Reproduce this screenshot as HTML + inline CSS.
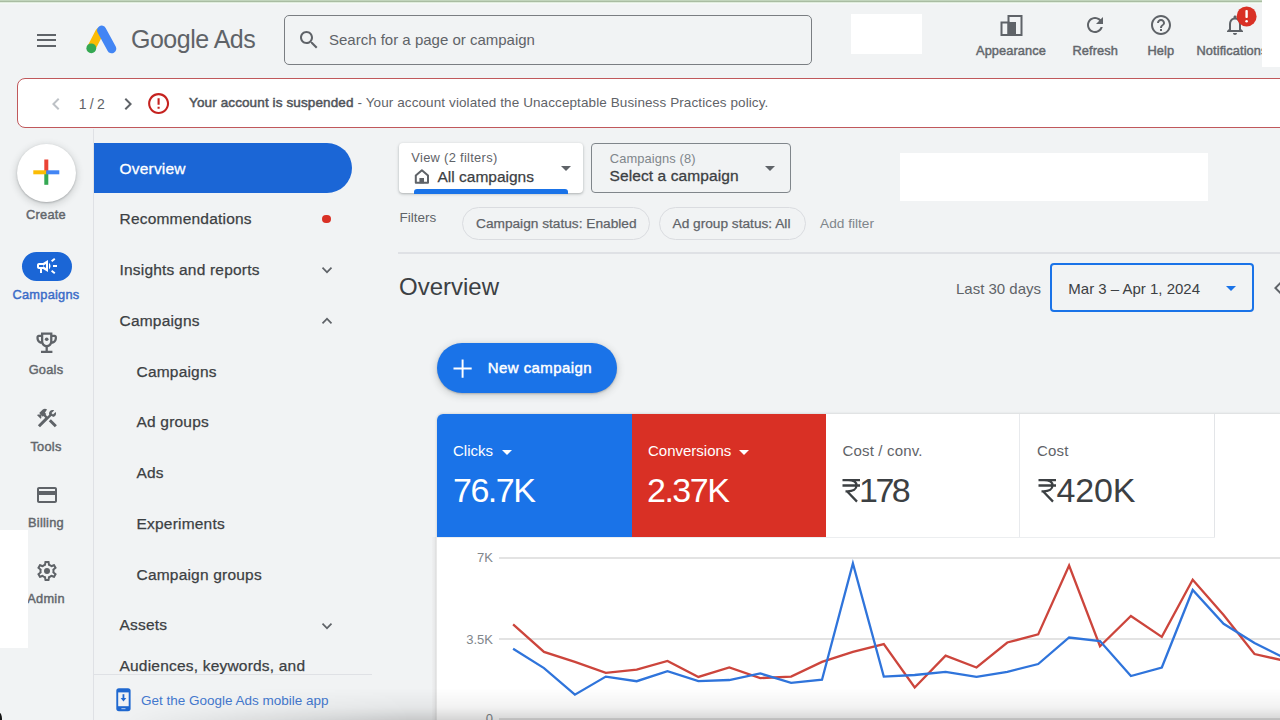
<!DOCTYPE html>
<html><head><meta charset="utf-8">
<style>
*{box-sizing:border-box;margin:0;padding:0}
html,body{width:1280px;height:720px;overflow:hidden;background:#f1f3f4;font-family:"Liberation Sans",sans-serif;color:#202124;position:relative}
.a{position:absolute;white-space:nowrap;line-height:normal}
svg.a{overflow:visible}
.lbl{font-size:12.8px;color:#63676c;font-weight:normal;-webkit-text-stroke:0.45px currentColor;letter-spacing:0.1px}
.rl{font-size:12.8px;color:#63676c;font-weight:normal;-webkit-text-stroke:0.45px currentColor;letter-spacing:0.25px;width:92px;left:0;text-align:center}
.nav{font-size:15.5px;color:#3c4043;letter-spacing:0.2px;-webkit-text-stroke:0.25px #3c4043}
.chip{border:1px solid #dadce0;border-radius:17px}
.ct{font-size:13.7px;color:#5f6368;font-weight:normal;-webkit-text-stroke:0.25px #5f6368}
</style></head><body>
<div class="a" style="left:0;top:0;width:1262px;height:4px;background:linear-gradient(to bottom,#cde0c8 0,#a9bca2 1.5px,#e6f1e4 2.6px,#f5fbf6 3.3px,rgba(245,251,246,0) 4px)"></div>

<!-- ===== header ===== -->
<div class="a" style="left:37px;top:34px;width:19px;height:2px;background:#5f6368"></div>
<div class="a" style="left:37px;top:39px;width:19px;height:2px;background:#5f6368"></div>
<div class="a" style="left:37px;top:44.5px;width:19px;height:2px;background:#5f6368"></div>

<svg class="a" style="left:0;top:0" width="130" height="60">
  <path d="M99.6 32 L91.2 48.2" stroke="#fbbc04" stroke-width="8.6" stroke-linecap="round"/>
  <path d="M101.6 30.2 L111.7 48.7" stroke="#4285f4" stroke-width="9.2" stroke-linecap="round"/>
  <circle cx="91.3" cy="48.3" r="4.9" fill="#34a853"/>
</svg>
<div class="a" style="left:131px;top:25.4px;font-size:25px;color:#5f6368;letter-spacing:-0.5px">Google Ads</div>

<div class="a" style="left:283.5px;top:15px;width:528px;height:50px;border:1.8px solid #7a7e82;border-radius:5px"></div>
<svg class="a" style="left:297px;top:28px" width="24" height="24" viewBox="0 0 24 24"><path fill="#5f6368" d="M15.5 14h-.79l-.28-.27C15.41 12.590 16 11.11 16 9.5 16 5.91 13.09 3 9.5 3S3 5.91 3 9.5 5.91 16 9.5 16c1.61 0 3.090-.59 4.23-1.57l.27.28v.79l5 4.99L20.49 19l-4.99-5zm-6 0C7.01 14 5 11.99 5 9.5S7.01 5 9.5 5 14 7.01 14 9.5 11.99 14 9.5 14z"/></svg>
<div class="a" style="left:329px;top:31px;font-size:15px;color:#5f6368">Search for a page or campaign</div>

<div class="a" style="left:851px;top:14px;width:71px;height:40px;background:#fff"></div>

<!-- appearance icon -->
<svg class="a" style="left:0;top:0" width="1280" height="70">
  <rect x="1008.5" y="16" width="13" height="19" fill="none" stroke="#5f6368" stroke-width="2"/>
  <rect x="1001.5" y="22.5" width="7" height="12.5" fill="none" stroke="#5f6368" stroke-width="2"/>
  <rect x="1008" y="22" width="8" height="13.5" fill="#5f6368"/>
</svg>
<svg class="a" style="left:1083px;top:13px" width="24" height="24" viewBox="0 0 24 24"><path fill="#5f6368" d="M17.65 6.35C16.2 4.9 14.21 4 12 4c-4.42 0-7.99 3.58-7.99 8s3.57 8 7.99 8c3.73 0 6.84-2.55 7.730-6h-2.08c-.82 2.33-3.04 4-5.65 4-3.31 0-6-2.69-6-6s2.69-6 6-6c1.66 0 3.14.69 4.22 1.78L13 11h7V4l-2.35 2.35z"/></svg>
<svg class="a" style="left:1149px;top:13px" width="24" height="24" viewBox="0 0 24 24"><path fill="#5f6368" d="M11 18h2v-2h-2v2zm1-16C6.48 2 2 6.48 2 12s4.48 10 10 10 10-4.48 10-10S17.52 2 12 2zm0 18c-4.41 0-8-3.59-8-8s3.59-8 8-8 8 3.59 8 8-3.590 8-8 8zm0-14c-2.21 0-4 1.79-4 4h2c0-1.1.9-2 2-2s2 .9 2 2c0 2-3 1.75-3 5h2c0-2.25 3-2.5 3-5 0-2.21-1.79-4-4-4z"/></svg>
<svg class="a" style="left:1223px;top:13px" width="24" height="24" viewBox="0 0 24 24"><path fill="#5f6368" d="M12 22c1.1 0 2-.9 2-2h-4c0 1.1.89 2 2 2zm6-6v-5c0-3.07-1.64-5.64-4.5-6.32V4c0-.83-.67-1.5-1.5-1.5s-1.5.67-1.5 1.5v.68C7.63 5.36 6 7.920 6 11v5l-2 2v1h16v-1l-2-2zm-2 1H8v-6c0-2.48 1.51-4.5 4-4.5s4 2.02 4 4.5v6z"/></svg>
<svg class="a" style="left:1236px;top:6px" width="22" height="22"><circle cx="10.6" cy="10.4" r="10" fill="#d93025"/><rect x="9.4" y="4" width="2.4" height="8" rx="1" fill="#fff"/><circle cx="10.6" cy="15.2" r="1.3" fill="#fff"/></svg>

<div class="a lbl" style="left:976px;top:42.7px">Appearance</div>
<div class="a lbl" style="left:1072.5px;top:42.7px">Refresh</div>
<div class="a lbl" style="left:1147.5px;top:42.7px">Help</div>
<div class="a lbl" style="left:1196.5px;top:42.7px">Notifications</div>
<div class="a" style="left:1262px;top:0;width:18px;height:67px;background:#fff"></div>

<!-- ===== banner ===== -->
<div class="a" style="left:17px;top:77.9px;width:1300px;height:50.6px;border:1.5px solid #c0585b;border-radius:8px;background:#fff"></div>
<svg class="a" style="left:44px;top:92px" width="24" height="24" viewBox="0 0 24 24"><path fill="#bdc1c6" d="M15.41 7.41L14 6l-6 6 6 6 1.41-1.41L10.83 12z"/></svg>
<div class="a" style="left:78.8px;top:95.9px;font-size:14px;color:#5f6368;letter-spacing:-0.3px">1 / 2</div>
<svg class="a" style="left:116.1px;top:91.6px" width="24" height="24" viewBox="0 0 24 24"><path fill="#5f6368" d="M10 6L8.59 7.41 13.170 12l-4.58 4.59L10 18l6-6z"/></svg>
<svg class="a" style="left:146.4px;top:90.9px" width="25.2" height="25.2" viewBox="0 0 24 24"><path fill="#c5221f" d="M11 15h2v2h-2zm0-8h2v6h-2zm.99-5C6.47 2 2 6.48 2 12s4.47 10 9.99 10C17.52 22 22 17.52 22 12S17.52 2 11.99 2zM12 20c-4.42 0-8-3.58-8-8s3.58-8 8-8 8 3.58 8 8-3.58 8-8 8z"/></svg>
<div class="a" style="left:189px;top:95.1px;font-size:13.5px;color:#5f6368"><span style="color:#50545a;font-size:13.5px;letter-spacing:0.12px;-webkit-text-stroke:0.5px #50545a">Your account is suspended</span><span style="letter-spacing:0.1px"> - Your account violated the Unacceptable Business Practices policy.</span></div>

<!-- ===== left rail ===== -->
<div class="a" style="left:92.5px;top:129px;width:1.5px;height:591px;background:#dfe1e5"></div>
<div class="a" style="left:17px;top:143.5px;width:58.5px;height:58px;border-radius:50%;background:#fff;box-shadow:0 1px 2px rgba(60,64,67,.3),0 2px 6px 2px rgba(60,64,67,.15)"></div>
<svg class="a" style="left:0;top:0" width="93" height="720">
  <rect x="44.3" y="159.5" width="4" height="13" fill="#ea4335"/>
  <rect x="44.3" y="172" width="4" height="12.8" fill="#34a853"/>
  <rect x="33.3" y="170.3" width="13" height="4" fill="#fbbc04"/>
  <rect x="46.3" y="170.3" width="13" height="4" fill="#4285f4"/>
</svg>
<div class="a rl" style="top:207.2px">Create</div>
<div class="a" style="left:21.5px;top:252px;width:50.5px;height:29px;border-radius:15px;background:#1b66d6"></div>
<svg class="a" style="left:34.5px;top:254px" width="24" height="24" viewBox="0 0 24 24"><path fill="#fff" d="M18 11v2h4v-2h-4zm-2 6.61c.96.71 2.21 1.65 3.2 2.39.4-.53.8-1.07 1.2-1.6-.99-.74-2.24-1.68-3.2-2.4-.4.54-.8 1.08-1.2 1.61zM20.4 5.6c-.4-.53-.8-1.070-1.2-1.6-.99.74-2.24 1.68-3.2 2.4.4.53.8 1.07 1.2 1.6.96-.72 2.21-1.65 3.2-2.4zM4 9c-1.1 0-2 .9-2 2v2c0 1.1.9 2 2 2h1v4h2v-4h1l5 3V6L8 9H4zm11.5 3c0-1.33-.58-2.53-1.5-3.35v6.69c.92-.81 1.5-2.01 1.5-3.34z"/><rect x="4" y="11" width="4.5" height="2" fill="#1b66d6"/><path d="M9 11.2L11 10v4l-2-1.2z" fill="#1b66d6"/></svg>
<div class="a rl" style="top:287.2px;color:#3b6cc8">Campaigns</div>
<svg class="a" style="left:32.8px;top:328.8px" width="27.4" height="27.4" viewBox="0 0 24 24"><path fill="#5f6368" d="M19 5h-2V3H7v2H5c-1.1 0-2 .9-2 2v1c0 2.55 1.92 4.63 4.39 4.94.63 1.5 1.98 2.63 3.61 2.96V19H7v2h10v-2h-4v-3.1c1.63-.33 2.98-1.46 3.61-2.96C19.08 12.63 21 10.55 21 8V7c0-1.1-.9-2-2-2zM5 8V7h2v3.82C5.84 10.4 5 9.3 5 8zm7 6c-1.65 0-3-1.35-3-3V5h6v6c0 1.65-1.35 3-3 3zm7-6c0 1.3-.84 2.4-2 2.82V7h2v1z"/><circle cx="12" cy="9" r="1.6" fill="#5f6368"/></svg>
<div class="a rl" style="top:362.1px">Goals</div>
<svg class="a" style="left:34.5px;top:406px" width="24" height="24" viewBox="0 0 24 24"><path fill="#5f6368" d="M13.78 15.3l6 6 2.11-2.16-6-6-2.11 2.16zm3.72-5.2c-.39 0-.81-.05-1.14-.19L4.97 21.25l-2.11-2.11 7.41-7.4L8.5 9.96l-.72.71-1.45-1.44v2.86l-.7.7-3.52-3.56.7-.7h2.81l-1.4-1.44 3.56-3.560c1.17-1.17 3.07-1.17 4.24 0L9.9 6.65l1.41 1.41-.71.71 1.79 1.79 1.82-1.88c-.14-.33-.19-.75-.19-1.12 0-1.99 1.57-3.56 3.56-3.56.59 0 1.11.14 1.58.42L16.46 7.1l1.5 1.5 2.68-2.68c.28.47.42.97.42 1.58 0 1.99-1.57 3.6-3.56 3.6z"/></svg>
<div class="a rl" style="top:438.5px">Tools</div>
<svg class="a" style="left:34.5px;top:482.5px" width="24" height="24" viewBox="0 0 24 24"><path fill="#5f6368" d="M20 4H4c-1.11 0-1.99.89-1.99 2L2 18c0 1.11.89 2 2 2h16c1.11 0 2-.89 2-2V6c0-1.11-.89-2-2-2zm0 14H4v-6h16v6zm0-10H4V6h16v2z"/></svg>
<div class="a rl" style="top:514.5px">Billing</div>
<svg class="a" style="left:34.5px;top:558.5px" width="24" height="24" viewBox="0 0 24 24"><path fill="#5f6368" d="M19.43 12.98c.04-.32.07-.64.07-.98 0-.34-.03-.66-.07-.98l2.11-1.65c.19-.15.24-.42.12-.64l-2-3.46c-.09-.16-.26-.25-.44-.25-.06 0-.12.01-.17.03l-2.49 1c-.52-.4-1.08-.73-1.69-.98l-.38-2.65C14.46 2.18 14.25 2 14 2h-4c-.25 0-.46.18-.49.42l-.38 2.65c-.61.25-1.17.59-1.690.98l-2.49-1c-.06-.02-.12-.03-.18-.03-.17 0-.34.09-.43.25l-2 3.46c-.13.22-.07.49.12.64l2.11 1.65c-.04.32-.07.65-.07.98 0 .33.03.66.07.98l-2.11 1.65c-.19.15-.24.42-.12.64l2 3.46c.09.16.26.25.44.25.06 0 .12-.01.17-.03l2.49-1c.52.4 1.08.73 1.69.98l.38 2.65c.03.24.24.42.49.42h4c.25 0 .46-.18.49-.42l.38-2.65c.61-.25 1.17-.59 1.69-.98l2.49 1c.06.02.12.03.18.03.17 0 .34-.09.43-.25l2-3.46c.12-.22.07-.49-.12-.64l-2.11-1.65zm-1.98-1.71c.04.31.05.52.05.73 0 .21-.02.43-.05.73l-.14 1.13.89.7 1.08.84-.7 1.21-1.27-.51-1.04-.42-.9.68c-.43.32-.84.56-1.25.73l-1.06.43-.16 1.13-.2 1.35h-1.4l-.19-1.35-.16-1.13-1.06-.43c-.43-.18-.83-.41-1.23-.71l-.91-.7-1.06.43-1.27.51-.7-1.21 1.08-.84.89-.7-.14-1.13c-.03-.31-.05-.54-.05-.74s.02-.43.05-.73l.14-1.13-.89-.7-1.08-.84.7-1.21 1.27.51 1.04.42.9-.68c.43-.32.84-.56 1.25-.73l1.06-.43.16-1.13.2-1.35h1.39l.19 1.35.16 1.13 1.06.43c.43.18.83.41 1.23.71l.91.7 1.06-.43 1.27-.51.7 1.21-1.07.85-.89.7.14 1.13z"/><circle cx="12" cy="12" r="3" fill="#5f6368"/></svg>
<div class="a rl" style="top:591px">Admin</div>
<div class="a" style="left:0;top:529.5px;width:28.3px;height:118.5px;background:#fff"></div>

<!-- ===== nav ===== -->
<div class="a" style="left:94px;top:143px;width:258px;height:50px;border-radius:0 25px 25px 0;background:#1b66d6"></div>
<div class="a nav" style="left:119.5px;top:159.7px;color:#fff;-webkit-text-stroke:0.3px #fff">Overview</div>
<div class="a nav" style="left:119.5px;top:210px">Recommendations</div>
<div class="a" style="left:322.3px;top:214.5px;width:8.6px;height:8.6px;border-radius:50%;background:#d93025"></div>
<div class="a nav" style="left:119.5px;top:260.8px">Insights and reports</div>
<svg class="a" style="left:314.5px;top:258px" width="24" height="24" viewBox="0 0 24 24"><path fill="#5f6368" d="M16.59 8.590L12 13.17 7.41 8.59 6 10l6 6 6-6z" transform="translate(12 12) scale(.85) translate(-12 -12)"/></svg>
<div class="a nav" style="left:119.5px;top:311.5px">Campaigns</div>
<svg class="a" style="left:314.5px;top:308.5px" width="24" height="24" viewBox="0 0 24 24"><path fill="#5f6368" d="M12 8l-6 6 1.41 1.41L12 10.83l4.59 4.58L18 14z" transform="translate(12 12) scale(.85) translate(-12 -12)"/></svg>
<div class="a nav" style="left:136.5px;top:362.5px">Campaigns</div>
<div class="a nav" style="left:136.5px;top:413.2px">Ad groups</div>
<div class="a nav" style="left:136.5px;top:464px">Ads</div>
<div class="a nav" style="left:136.5px;top:514.8px">Experiments</div>
<div class="a nav" style="left:136.5px;top:565.6px">Campaign groups</div>
<div class="a nav" style="left:119.5px;top:616.2px">Assets</div>
<svg class="a" style="left:314.5px;top:613.5px" width="24" height="24" viewBox="0 0 24 24"><path fill="#5f6368" d="M16.59 8.59L12 13.17 7.41 8.59 6 10l6 6 6-6z" transform="translate(12 12) scale(.85) translate(-12 -12)"/></svg>
<div class="a" style="left:94px;top:640px;width:278px;height:33.5px;overflow:hidden">
  <div class="a nav" style="left:25.5px;top:16.6px">Audiences, keywords, and</div>
</div>
<div class="a" style="left:94px;top:673.5px;width:278px;height:1.5px;background:#dfe1e5"></div>
<svg class="a" style="left:0;top:0" width="140" height="720"><rect x="116.3" y="688.2" width="14.3" height="23" rx="2.6" fill="#1f68d0"/><rect x="118.2" y="692.4" width="10.5" height="13.8" fill="#f1f3f4"/><path d="M123.45 694.2V698.8" stroke="#1f68d0" stroke-width="1.8"/><path d="M120.6 698H126.3L123.45 701.6Z" fill="#1f68d0"/><path d="M121.4 708.6H125.5" stroke="#9cbbe8" stroke-width="1.2"/></svg><div class="a" style="left:-3.5px;top:712.5px;width:5px;height:12px;border-radius:50%;background:#151515"></div>
<div class="a" style="left:141px;top:692.6px;font-size:13.5px;color:#4479cf">Get the Google Ads mobile app</div>

<!-- ===== main top ===== -->
<div class="a" style="left:399px;top:143px;width:183.5px;height:50px;background:#fff;border-radius:4px;box-shadow:0 1px 2px rgba(60,64,67,.25),0 1px 3px 1px rgba(60,64,67,.1)"></div>
<div class="a" style="left:411.3px;top:149.8px;font-size:12.9px;color:#5f6368;letter-spacing:0.3px">View (2 filters)</div>
<svg class="a" style="left:410px;top:165px" width="24" height="24" viewBox="0 0 24 24"><path d="M5.8 17.75V10.4L11.9 5.2L18 10.4V17.75Z" fill="none" stroke="#5f6368" stroke-width="2" stroke-linejoin="round"/><rect x="9.4" y="13" width="4.6" height="5.3" fill="#5f6368"/></svg>
<div class="a" style="left:437.5px;top:167.5px;font-size:15.5px;color:#3c4043;-webkit-text-stroke:0.25px #3c4043">All campaigns</div>
<svg class="a" style="left:554px;top:156px" width="24" height="24" viewBox="0 0 24 24"><path fill="#5f6368" d="M7 10l5 5 5-5z"/></svg>
<div class="a" style="left:413.5px;top:189px;width:154.5px;height:4.5px;background:#1a73e8;border-radius:3px 3px 0 0"></div>

<div class="a" style="left:591px;top:143px;width:199.5px;height:50px;border:1.2px solid #80868b;border-radius:4px"></div>
<div class="a" style="left:609.8px;top:150.8px;font-size:12.9px;color:#80868b;letter-spacing:0.1px">Campaigns (8)</div>
<div class="a" style="left:609.5px;top:167px;font-size:15.5px;color:#3c4043;letter-spacing:0.1px;-webkit-text-stroke:0.3px #3c4043">Select a campaign</div>
<svg class="a" style="left:758px;top:156px" width="24" height="24" viewBox="0 0 24 24"><path fill="#5f6368" d="M7 10l5 5 5-5z"/></svg>

<div class="a" style="left:900px;top:153px;width:308px;height:48px;background:#fff"></div>

<div class="a" style="left:399.5px;top:210.4px;font-size:13.5px;color:#5f6368">Filters</div>
<div class="a chip" style="left:462px;top:207px;width:188px;height:32.5px"></div>
<div class="a ct" style="left:476px;top:216.1px">Campaign status: Enabled</div>
<div class="a chip" style="left:659px;top:207px;width:147px;height:32.5px"></div>
<div class="a ct" style="left:672.5px;top:216.1px">Ad group status: All</div>
<div class="a" style="left:820px;top:216.1px;font-size:13.7px;color:#80868b">Add filter</div>
<div class="a" style="left:398px;top:252px;width:882px;height:1.5px;background:#dfe1e5"></div>

<div class="a" style="left:399px;top:273.1px;font-size:24px;color:#3c4043">Overview</div>
<div class="a" style="left:956px;top:279.7px;font-size:15px;color:#5f6368">Last 30 days</div>
<div class="a" style="left:1050px;top:263px;width:203.5px;height:49px;border:2px solid #1a73e8;border-radius:4px"></div>
<div class="a" style="left:1068.3px;top:279.7px;font-size:15px;color:#3c4043">Mar 3 – Apr 1, 2024</div>
<svg class="a" style="left:1219px;top:276px" width="24" height="24" viewBox="0 0 24 24"><path fill="#1a73e8" d="M7 10l5 5 5-5z"/></svg>
<svg class="a" style="left:1266px;top:276px" width="24" height="24" viewBox="0 0 24 24"><path fill="#5f6368" d="M15.41 7.41L14 6l-6 6 6 6 1.41-1.41L10.83 12z"/></svg>

<div class="a" style="left:437px;top:342.5px;width:179.5px;height:50px;border-radius:25px;background:#1a73e8;box-shadow:0 1px 2px rgba(60,64,67,.3),0 2px 6px 2px rgba(60,64,67,.15)"></div>
<svg class="a" style="left:446.5px;top:352.5px" width="31.2" height="31.2" viewBox="0 0 24 24"><path fill="#fff" d="M19 12.75h-6.25V19h-1.5v-6.25H5v-1.5h6.25V5h1.5v6.25H19z"/></svg>
<div class="a" style="left:487.8px;top:359px;font-size:15px;color:#fff;letter-spacing:0.42px;-webkit-text-stroke:0.45px #fff">New campaign</div>

<!-- ===== scorecards ===== -->
<div class="a" style="left:437px;top:414px;width:843px;height:306px;background:#fff;border-radius:6px 0 0 0;box-shadow:0 0 2px 1px rgba(60,64,67,.12)"></div>
<div class="a" style="left:437px;top:414px;width:194.5px;height:122.5px;background:#1a73e8;border-radius:6px 0 0 0"></div>
<div class="a" style="left:631.5px;top:414px;width:194px;height:122.5px;background:#d93025"></div>
<div class="a" style="left:1019px;top:414px;width:1px;height:122.5px;background:#e8eaed"></div>
<div class="a" style="left:1214px;top:414px;width:1.2px;height:122.5px;background:#e3e5e8"></div>
<div class="a" style="left:437px;top:536.5px;width:778px;height:1px;background:#eceef0"></div>

<div class="a" style="left:453px;top:442.2px;font-size:15px;color:#fff">Clicks</div>
<svg class="a" style="left:495px;top:440px" width="24" height="24" viewBox="0 0 24 24"><path fill="#fff" d="M7 10l5 5 5-5z"/></svg>
<div class="a" style="left:453px;top:470.7px;font-size:34px;color:#fff;letter-spacing:-1.5px">76.7K</div>
<div class="a" style="left:648px;top:442.2px;font-size:15px;color:#fff">Conversions</div>
<svg class="a" style="left:732px;top:440px" width="24" height="24" viewBox="0 0 24 24"><path fill="#fff" d="M7 10l5 5 5-5z"/></svg>
<div class="a" style="left:647px;top:470.7px;font-size:34px;color:#fff;letter-spacing:-1.5px">2.37K</div>
<div class="a" style="left:842.5px;top:442px;font-size:15px;color:#5f6368;letter-spacing:0.17px">Cost / conv.</div>
<div class="a" style="left:1037px;top:442px;font-size:15px;color:#5f6368;letter-spacing:0.17px">Cost</div>

<svg class="a" style="left:842px;top:479px" width="20" height="24" viewBox="0 0 20 24"><path fill="none" stroke="#3c4043" stroke-width="2.3" d="M0.5 1.2H18M0.5 6.5H18M6 1.2C12.5 1.2 14.5 3.5 14.5 6.5C14.5 10 11 12.3 5.5 12.3H3.5M5 12.3L15 22.6"/></svg>
<div class="a" style="left:859px;top:470.7px;font-size:34px;color:#3c4043;letter-spacing:-2.5px">178</div>
<svg class="a" style="left:1037.5px;top:479px" width="20" height="24" viewBox="0 0 20 24"><path fill="none" stroke="#3c4043" stroke-width="2.3" d="M0.5 1.2H18M0.5 6.5H18M6 1.2C12.5 1.2 14.5 3.5 14.5 6.5C14.5 10 11 12.3 5.5 12.3H3.5M5 12.3L15 22.6"/></svg>
<div class="a" style="left:1056.5px;top:470.7px;font-size:34px;color:#3c4043;letter-spacing:-0.2px">420K</div>

<!-- ===== chart ===== -->
<div class="a" style="left:432px;top:537px;width:5px;height:183px;background:linear-gradient(to right,#eff0f1,#e8e9ea 50%,#dcdcdc 80%,#f4f4f4)"></div>
<div class="a" style="left:499px;top:556.5px;width:781px;height:2px;background:#e3e3e3"></div>
<div class="a" style="left:499px;top:637.5px;width:781px;height:2px;background:#e3e3e3"></div>
<div class="a" style="left:499px;top:717.5px;width:781px;height:2px;background:#e3e3e3"></div>
<div class="a" style="left:443px;width:50px;text-align:right;top:550.2px;font-size:13px;color:#80868b">7K</div>
<div class="a" style="left:443px;width:50px;text-align:right;top:631.5px;font-size:13px;color:#80868b">3.5K</div>
<div class="a" style="left:443px;width:50px;text-align:right;top:711px;font-size:13px;color:#80868b">0</div>
<svg class="a" style="left:0;top:0" width="1280" height="720" id="chart"><polyline fill="none" stroke="#cc453c" stroke-width="2.3" stroke-linejoin="miter" points="513.1,624.4 544.0,651.9 574.9,661.9 605.8,672.8 636.7,669.7 667.5,660.9 698.4,676.9 729.3,667.5 760.2,678.1 791.1,676.6 822.0,661.9 852.9,651.9 883.8,644.1 914.7,687.5 945.6,655.6 976.5,667.5 1007.3,642.5 1038.2,634.4 1069.1,565.6 1100.0,646.2 1130.9,616.0 1161.8,636.9 1192.7,579.7 1223.6,615.0 1254.5,654.0 1285.3,661.0"/><polyline fill="none" stroke="#2f74db" stroke-width="2.3" stroke-linejoin="miter" points="513.1,648.8 544.0,668.1 574.9,694.7 605.8,676.6 636.7,681.2 667.5,671.2 698.4,681.2 729.3,680.0 760.2,673.4 791.1,682.8 822.0,679.7 852.9,563.4 883.8,676.6 914.7,675.0 945.6,671.9 976.5,676.9 1007.3,671.9 1038.2,664.0 1069.1,637.5 1100.0,641.0 1130.9,676.0 1161.8,667.5 1192.7,590.0 1223.6,623.8 1254.5,643.0 1285.3,658.4"/></svg>

<!-- bottom shade -->
<div class="a" style="left:110px;top:688px;width:1170px;height:32px;background:linear-gradient(to bottom,rgba(0,0,0,0),rgba(0,0,0,.05) 60%,rgba(0,0,0,.17));-webkit-mask-image:linear-gradient(to right,transparent,#000 300px)"></div>
</body></html>
